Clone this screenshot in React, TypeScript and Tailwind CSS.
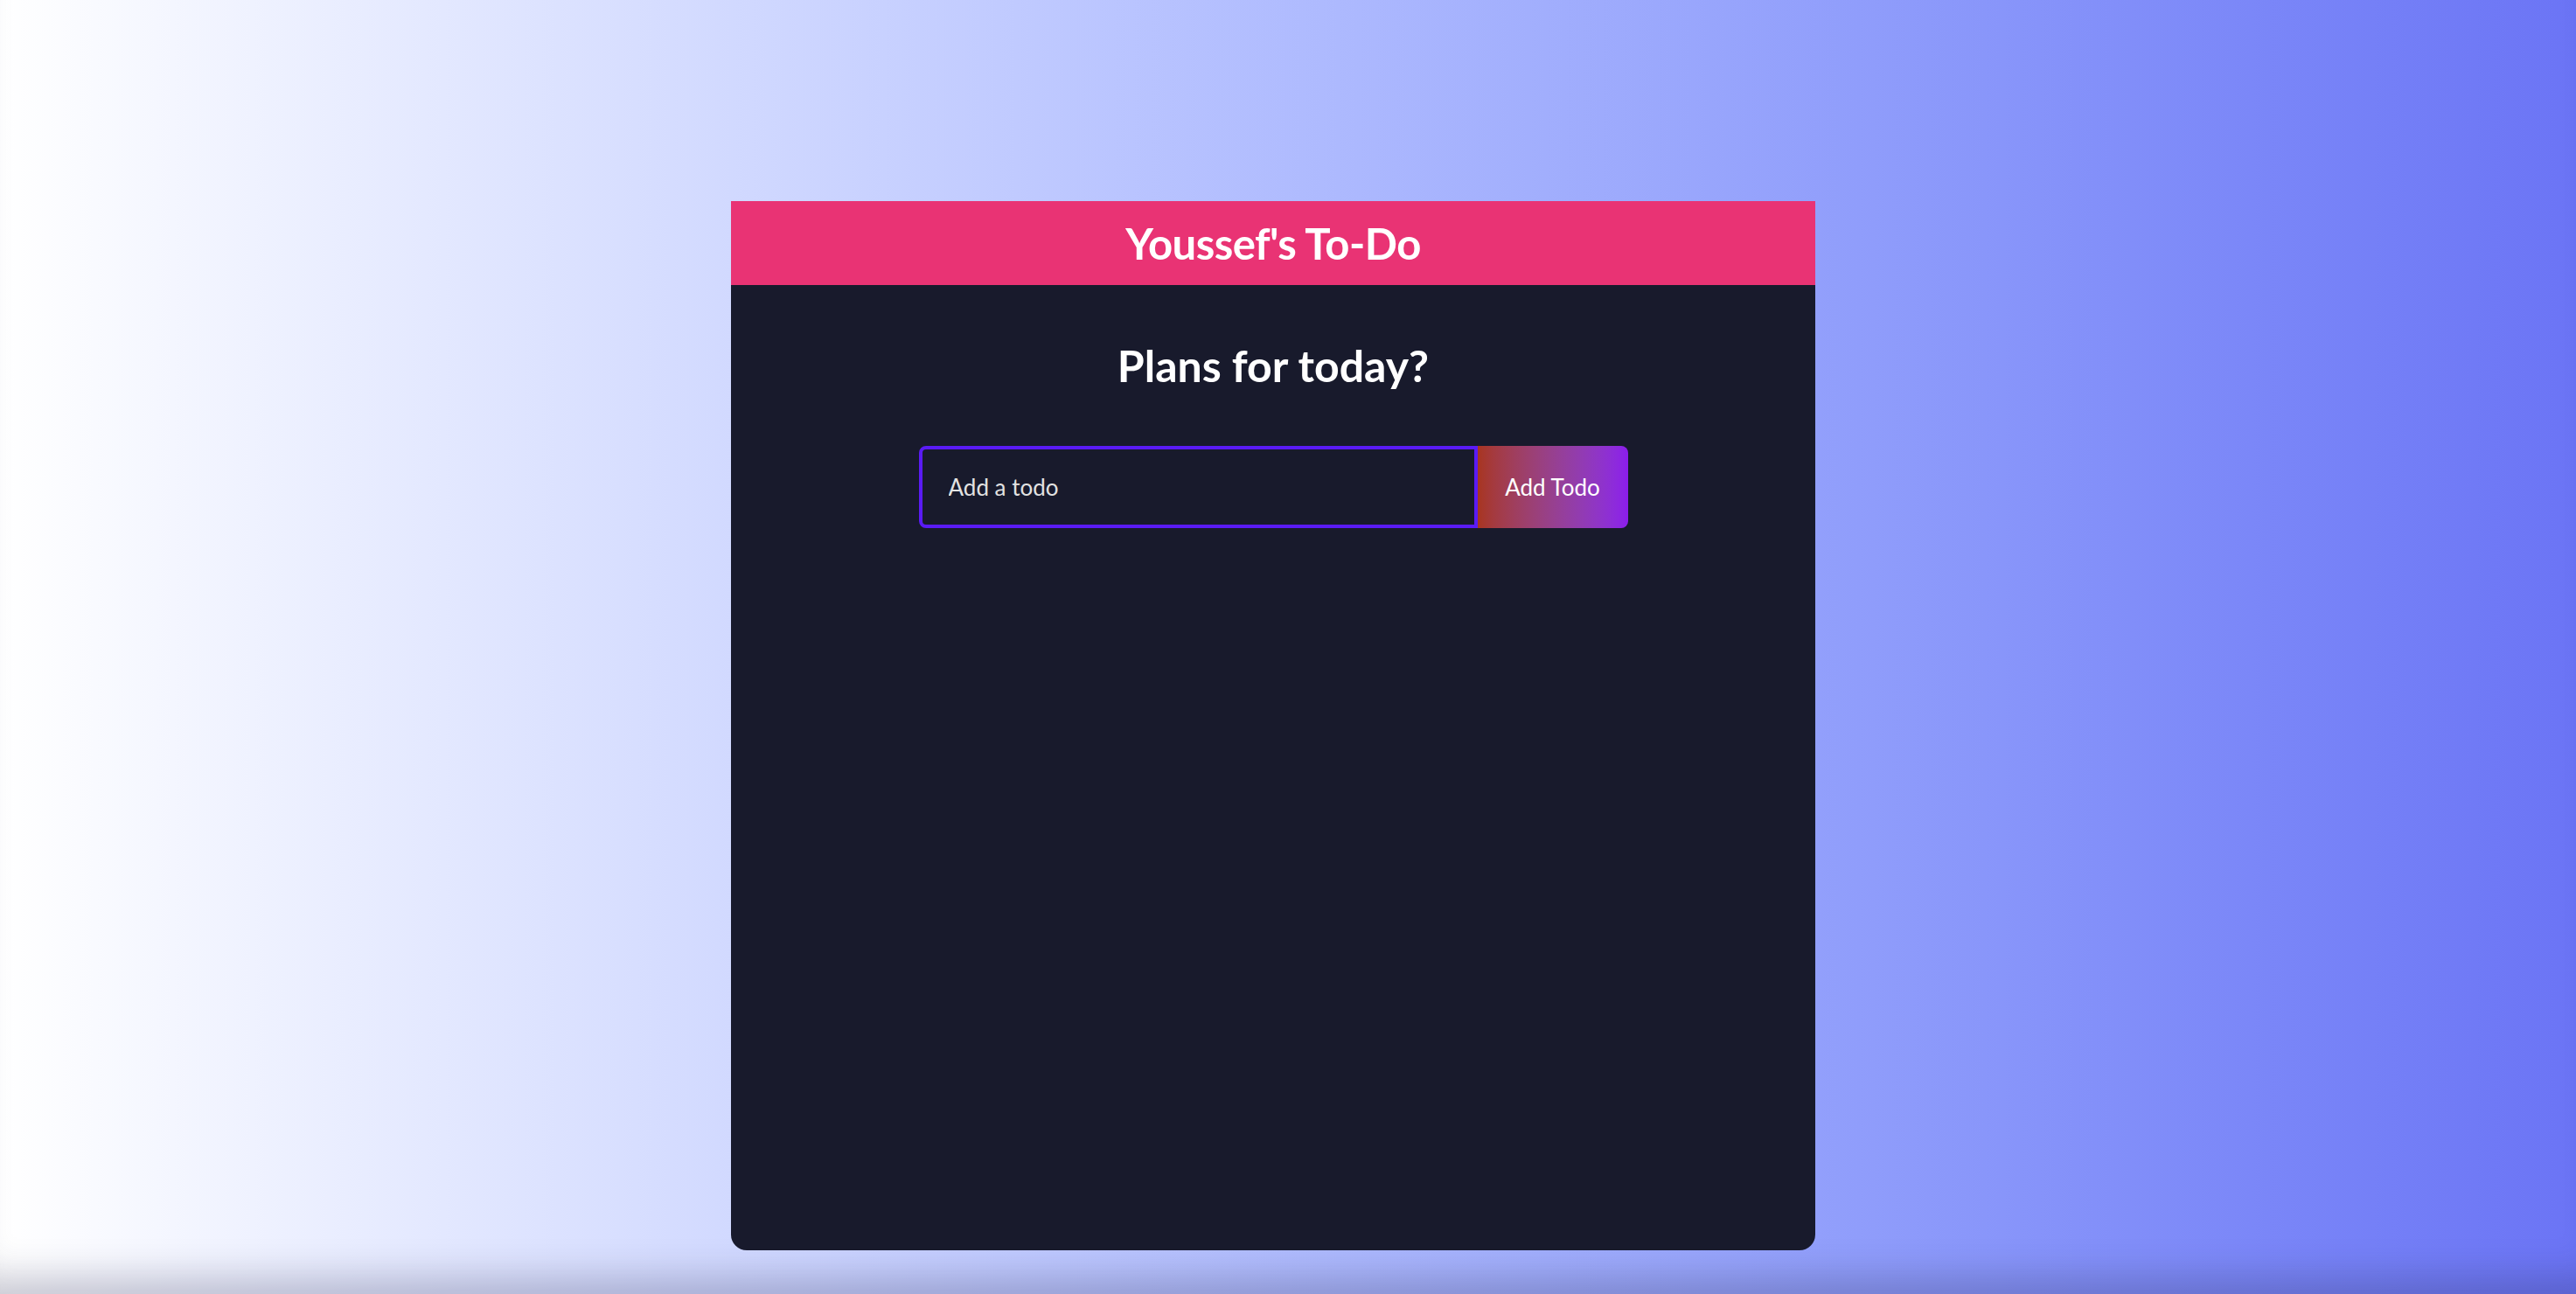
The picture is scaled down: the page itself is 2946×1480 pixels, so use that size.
import React, { useState } from 'react';

const App: React.FC = () => {
  const [todo, setTodo] = useState('');

  return (
    <div
      className="min-h-screen w-full bg-gradient-to-r from-white to-[#6b74f5] flex flex-col items-center pt-[230px] pr-[34px] shadow-[inset_0_-50px_40px_-30px_rgba(40,40,80,0.25)]"
      style={{ fontFamily: 'Lato, "Open Sans", sans-serif' }}
    >
      <div className="w-[1240px] h-[1200px] bg-[#181a2c] rounded-b-[18px] flex flex-col">
        {/* Header */}
        <div className="h-[96px] bg-[#e93374] flex items-center justify-center">
          <h1 className="text-white font-bold text-[49px] leading-none tracking-[-0.5px]">Youssef's To-Do</h1>
        </div>

        {/* Body */}
        <div className="flex flex-col items-center">
          <h2 className="mt-[62px] h-[60px] flex items-center text-white font-bold text-[50px] leading-none">
            Plans for today?
          </h2>

          <form
            className="mt-[62px] flex"
            onSubmit={(e) => {
              e.preventDefault();
              setTodo('');
            }}
          >
            <input
              value={todo}
              onChange={(e) => setTodo(e.target.value)}
              placeholder="Add a todo"
              className="w-[639px] h-[94px] bg-transparent border-4 border-[#5a1bf5] rounded-l-lg pl-[30px] text-[26px] text-white placeholder:text-[#e2e2e2] outline-none"
            />
            <button
              type="submit"
              className="w-[172px] h-[94px] rounded-r-lg bg-gradient-to-r from-[#a8351f] to-[#8c1cec] text-white text-[26px]"
            >
              Add Todo
            </button>
          </form>
        </div>
      </div>
    </div>
  );
};

export default App;
